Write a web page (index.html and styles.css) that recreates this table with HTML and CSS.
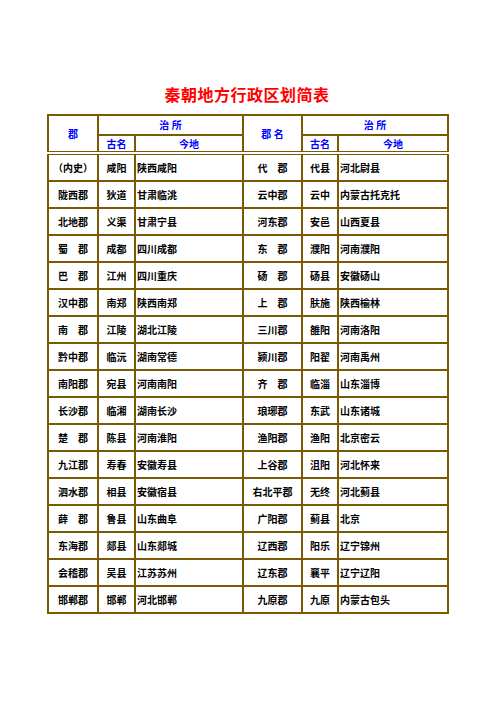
FILE: index.html
```html
<!DOCTYPE html>
<html lang="zh">
<head>
<meta charset="utf-8">
<title>秦朝地方行政区划简表</title>
<link rel="stylesheet" href="styles.css">
</head>
<body>
<div class="page">
  <h1 class="title">秦朝地方行政区划简表</h1>
  <table class="grid">
    <colgroup>
      <col class="c1"><col class="c2"><col class="c3"><col class="c4"><col class="c5"><col class="c6">
    </colgroup>
    <thead>
      <tr class="h1">
        <th rowspan="2">郡</th>
        <th colspan="2">治 所</th>
        <th rowspan="2">郡 名</th>
        <th colspan="2">治 所</th>
      </tr>
      <tr class="h2">
        <th>古名</th><th>今地</th><th>古名</th><th>今地</th>
      </tr>
    </thead>
    <tbody>
      <tr><td>（内史）</td><td>咸阳</td><td class="l">陕西咸阳</td><td>代　郡</td><td>代县</td><td class="l">河北尉县</td></tr>
      <tr><td>陇西郡</td><td>狄道</td><td class="l">甘肃临洮</td><td>云中郡</td><td>云中</td><td class="l">内蒙古托克托</td></tr>
      <tr><td>北地郡</td><td>义渠</td><td class="l">甘肃宁县</td><td>河东郡</td><td>安邑</td><td class="l">山西夏县</td></tr>
      <tr><td>蜀　郡</td><td>成都</td><td class="l">四川成都</td><td>东　郡</td><td>濮阳</td><td class="l">河南濮阳</td></tr>
      <tr><td>巴　郡</td><td>江州</td><td class="l">四川重庆</td><td>砀　郡</td><td>砀县</td><td class="l">安徽砀山</td></tr>
      <tr><td>汉中郡</td><td>南郑</td><td class="l">陕西南郑</td><td>上　郡</td><td>肤施</td><td class="l">陕西榆林</td></tr>
      <tr><td>南　郡</td><td>江陵</td><td class="l">湖北江陵</td><td>三川郡</td><td>雒阳</td><td class="l">河南洛阳</td></tr>
      <tr><td>黔中郡</td><td>临沅</td><td class="l">湖南常德</td><td>颍川郡</td><td>阳翟</td><td class="l">河南禹州</td></tr>
      <tr><td>南阳郡</td><td>宛县</td><td class="l">河南南阳</td><td>齐　郡</td><td>临淄</td><td class="l">山东淄博</td></tr>
      <tr><td>长沙郡</td><td>临湘</td><td class="l">湖南长沙</td><td>琅琊郡</td><td>东武</td><td class="l">山东诸城</td></tr>
      <tr><td>楚　郡</td><td>陈县</td><td class="l">河南淮阳</td><td>渔阳郡</td><td>渔阳</td><td class="l">北京密云</td></tr>
      <tr><td>九江郡</td><td>寿春</td><td class="l">安徽寿县</td><td>上谷郡</td><td>沮阳</td><td class="l">河北怀来</td></tr>
      <tr><td>泗水郡</td><td>相县</td><td class="l">安徽宿县</td><td>右北平郡</td><td>无终</td><td class="l">河北蓟县</td></tr>
      <tr><td>薛　郡</td><td>鲁县</td><td class="l">山东曲阜</td><td>广阳郡</td><td>蓟县</td><td class="l">北京</td></tr>
      <tr><td>东海郡</td><td>郯县</td><td class="l">山东郯城</td><td>辽西郡</td><td>阳乐</td><td class="l">辽宁锦州</td></tr>
      <tr><td>会稽郡</td><td>吴县</td><td class="l">江苏苏州</td><td>辽东郡</td><td>襄平</td><td class="l">辽宁辽阳</td></tr>
      <tr><td>邯郸郡</td><td>邯郸</td><td class="l">河北邯郸</td><td>九原郡</td><td>九原</td><td class="l">内蒙古包头</td></tr>
    </tbody>
  </table>
</div>
</body>
</html>
```

FILE: styles.css
```css
html, body {
  margin: 0;
  padding: 0;
  background: #ffffff;
}

.page {
  width: 400px;
  padding: 84px 0 0 47px;
  font-family: "Noto Sans CJK SC", "Noto Sans", sans-serif;
}

.title {
  margin: 0 0 10px 0;
  height: 20px;
  line-height: 20px;
  font-size: 16px;
  font-weight: 700;
  color: #ff0000;
  text-align: center;
  letter-spacing: 0.5px;
}

.grid {
  width: 400px;
  border-collapse: collapse;
  table-layout: fixed;
  font-size: 10px;
  font-weight: 700;
  color: #000000;
}

.c1 { width: 50px; }
.c2 { width: 37px; }
.c3 { width: 108px; }
.c4 { width: 59px; }
.c5 { width: 36px; }
.c6 { width: 110px; }

.grid th,
.grid td {
  border: 2px solid #7b5a06;
  padding: 0;
  text-align: center;
  vertical-align: middle;
  line-height: 12px;
  white-space: nowrap;
}

.grid th {
  color: #0000ff;
  font-weight: 700;
}

.grid .h1 th { height: 18px; }
.grid .h2 th {
  height: 15px;
  border-bottom: 4px double #7b5a06;
}
.grid thead th[rowspan] {
  border-bottom: 4px double #7b5a06;
}

.grid tbody td { height: 25px; }

.grid td.l {
  text-align: left;
  padding-left: 1px;
}
```
